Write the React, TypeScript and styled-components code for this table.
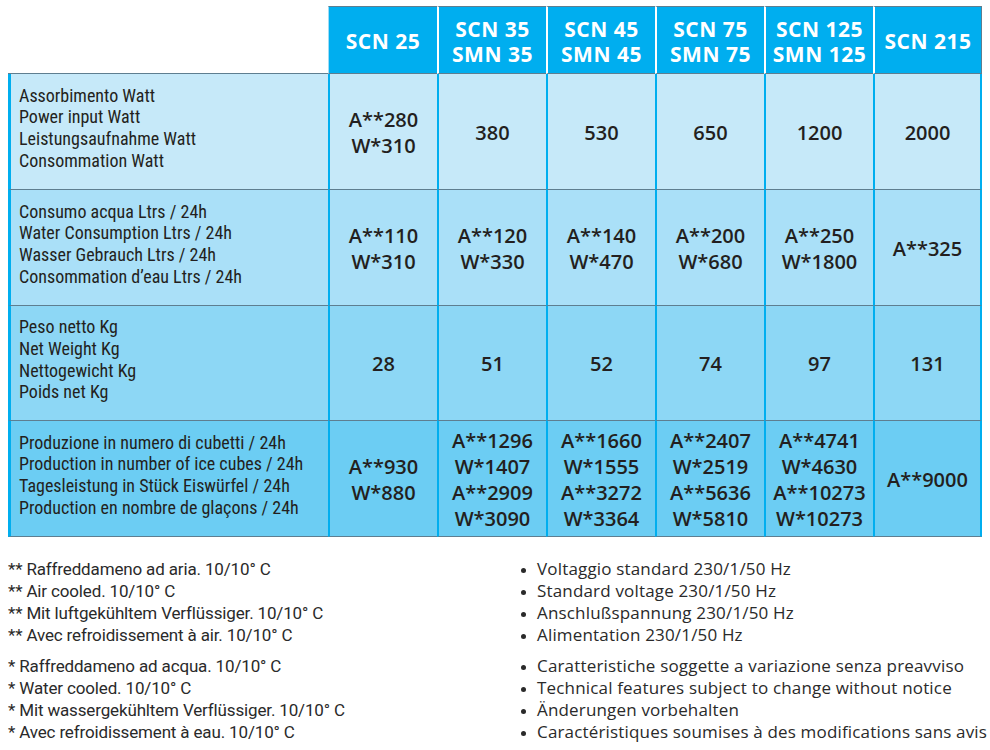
import React from "react";
import styled, { createGlobalStyle } from "styled-components";

const GlobalStyle = createGlobalStyle`
  html, body { margin: 0; padding: 0; background: #ffffff; }
  body { font-family: "Open Sans", "Noto Sans", sans-serif; color: #231f20; }
`;

const BLUE = "#00aeef";
const LINE = "#5e7e90";
const TONES = ["#c6e9f9", "#aae0f8", "#8dd7f5", "#6ccdf3"];

const Page = styled.div`
  padding: 6px 0 0 8px;
  width: 990px;
  box-sizing: border-box;
`;

const Table = styled.div`
  display: grid;
  grid-template-columns: 320px repeat(6, 109px);
  grid-template-rows: 68px 116px 116px 115px 116px;
  width: 975px;
`;

const Corner = styled.div`
  border-bottom: 1px solid ${LINE};
`;

const HeadCell = styled.div<{ $first?: boolean; $last?: boolean }>`
  box-sizing: border-box;
  background: ${BLUE};
  border-top: 1px solid ${LINE};
  border-bottom: 1px solid ${LINE};
  border-left: ${(p) => (p.$first ? `1px solid #9fdcf5` : `2px solid #ffffff`)};
  border-right: ${(p) => (p.$last ? `1px solid ${LINE}` : "none")};
  padding-top: 3px;
  display: flex;
  flex-direction: column;
  align-items: center;
  justify-content: center;
  color: #ffffff;
  font-weight: 700;
  font-size: 21px;
  letter-spacing: 0.5px;
  line-height: 25px;
  white-space: nowrap;
`;

const LabelCell = styled.div<{ $tone: number }>`
  background: ${(p) => TONES[p.$tone]};
  border-left: 3px solid ${BLUE};
  border-bottom: 1px solid ${LINE};
  padding: 0 0 7px 8px;
  box-sizing: border-box;
  display: flex;
  flex-direction: column;
  justify-content: center;
  font-family: Roboto, "Open Sans", sans-serif;
  font-size: 18px;
  font-stretch: condensed;
  line-height: 21.6px;
  color: #231f20;
  white-space: nowrap;
`;

const ValueCell = styled.div<{ $tone: number; $last?: boolean }>`
  background: ${(p) => TONES[p.$tone]};
  border-left: 2px solid ${BLUE};
  border-right: ${(p) => (p.$last ? `2px solid ${BLUE}` : "none")};
  border-bottom: 1px solid ${LINE};
  box-sizing: border-box;
  padding-top: 2px;
  display: flex;
  flex-direction: column;
  align-items: center;
  justify-content: center;
  font-size: 20px;
  font-weight: 600;
  line-height: 26px;
  color: #231f20;
  white-space: nowrap;
`;

const Notes = styled.div`
  display: grid;
  grid-template-columns: 513px 1fr;
  margin-top: 21px;
`;

const NoteColumn = styled.div`
  display: flex;
  flex-direction: column;
  gap: 9px;
`;

const NoteGroup = styled.div`
  display: flex;
  flex-direction: column;
`;

const NoteLine = styled.div<{ $narrow?: boolean }>`
  font-family: ${(p) => (p.$narrow ? `Roboto, "Open Sans", sans-serif` : `"Open Sans", sans-serif`)};
  font-size: 17px;
  line-height: 22px;
  color: #2a2a2a;
  white-space: nowrap;
  letter-spacing: ${(p) => (p.$narrow ? "-0.15px" : "0.17px")};
  display: flex;
  align-items: center;
`;

const Bullet = styled.span`
  flex: none;
  width: 5px;
  height: 5px;
  border-radius: 50%;
  background: #2a2a2a;
  margin: 2px 11px 0 0;
`;

const models = [["SCN 25"], ["SCN 35", "SMN 35"], ["SCN 45", "SMN 45"], ["SCN 75", "SMN 75"], ["SCN 125", "SMN 125"], ["SCN 215"]];

const rows: { labels: string[]; values: string[][] }[] = [
  {
    labels: ["Assorbimento Watt", "Power input Watt", "Leistungsaufnahme Watt", "Consommation Watt"],
    values: [["A**280", "W*310"], ["380"], ["530"], ["650"], ["1200"], ["2000"]],
  },
  {
    labels: ["Consumo acqua Ltrs / 24h", "Water Consumption Ltrs / 24h", "Wasser Gebrauch Ltrs / 24h", "Consommation d’eau Ltrs / 24h"],
    values: [["A**110", "W*310"], ["A**120", "W*330"], ["A**140", "W*470"], ["A**200", "W*680"], ["A**250", "W*1800"], ["A**325"]],
  },
  {
    labels: ["Peso netto Kg", "Net Weight Kg", "Nettogewicht Kg", "Poids net Kg"],
    values: [["28"], ["51"], ["52"], ["74"], ["97"], ["131"]],
  },
  {
    labels: ["Produzione in numero di cubetti / 24h", "Production in number of ice cubes / 24h", "Tagesleistung in Stück Eiswürfel / 24h", "Production en nombre de glaçons / 24h"],
    values: [
      ["A**930", "W*880"],
      ["A**1296", "W*1407", "A**2909", "W*3090"],
      ["A**1660", "W*1555", "A**3272", "W*3364"],
      ["A**2407", "W*2519", "A**5636", "W*5810"],
      ["A**4741", "W*4630", "A**10273", "W*10273"],
      ["A**9000"],
    ],
  },
];

const leftNotes = [
  ["** Raffreddameno ad aria. 10/10° C", "** Air cooled. 10/10° C", "** Mit luftgekühltem Verflüssiger. 10/10° C", "** Avec refroidissement à air. 10/10° C"],
  ["* Raffreddameno ad acqua. 10/10° C", "* Water cooled. 10/10° C", "* Mit wassergekühltem Verflüssiger. 10/10° C", "* Avec refroidissement à eau. 10/10° C"],
];

const rightNotes = [
  ["Voltaggio standard 230/1/50 Hz", "Standard voltage 230/1/50 Hz", "Anschlußspannung 230/1/50 Hz", "Alimentation 230/1/50 Hz"],
  ["Caratteristiche soggette a variazione senza preavviso", "Technical features subject to change without notice", "Änderungen vorbehalten", "Caractéristiques soumises à des modifications sans avis"],
];

export default function App() {
  return (
    <Page>
      <GlobalStyle />
      <Table>
        <Corner />
        {models.map((m, i) => (
          <HeadCell key={i} $first={i === 0} $last={i === models.length - 1}>
            {m.map((l) => (
              <span key={l}>{l}</span>
            ))}
          </HeadCell>
        ))}
        {rows.map((r, ri) => (
          <React.Fragment key={ri}>
            <LabelCell $tone={ri}>
              {r.labels.map((l) => (
                <span key={l}>{l}</span>
              ))}
            </LabelCell>
            {r.values.map((v, vi) => (
              <ValueCell key={vi} $tone={ri} $last={vi === r.values.length - 1}>
                {v.map((t) => (
                  <span key={t}>{t}</span>
                ))}
              </ValueCell>
            ))}
          </React.Fragment>
        ))}
      </Table>
      <Notes>
        <NoteColumn>
          {leftNotes.map((g, gi) => (
            <NoteGroup key={gi}>
              {g.map((l) => (
                <NoteLine key={l} $narrow>
                  {l}
                </NoteLine>
              ))}
            </NoteGroup>
          ))}
        </NoteColumn>
        <NoteColumn>
          {rightNotes.map((g, gi) => (
            <NoteGroup key={gi}>
              {g.map((l) => (
                <NoteLine key={l}>
                  <Bullet />
                  {l}
                </NoteLine>
              ))}
            </NoteGroup>
          ))}
        </NoteColumn>
      </Notes>
    </Page>
  );
}
